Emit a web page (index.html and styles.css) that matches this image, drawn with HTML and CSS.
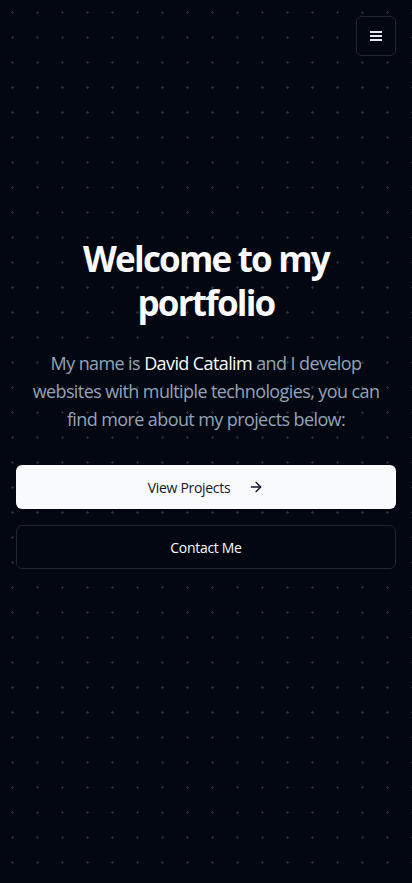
FILE: index.html
```html
<!DOCTYPE html>
<html lang="en">
<head>
<meta charset="utf-8">
<meta name="viewport" content="width=device-width, initial-scale=1">
<title>Portfolio</title>
<link rel="stylesheet" href="styles.css">
</head>
<body>
<div class="page">
  <header class="topbar">
    <button class="menu-btn" aria-label="Open menu">
      <svg width="12" height="10" viewBox="0 0 12 10" aria-hidden="true">
        <rect x="0" y="0" width="12" height="2" fill="currentColor"/>
        <rect x="0" y="4" width="12" height="2" fill="currentColor"/>
        <rect x="0" y="8" width="12" height="2" fill="currentColor"/>
      </svg>
    </button>
  </header>
  <main class="hero">
    <h1 class="hero-title">Welcome to my portfolio</h1>
    <p class="hero-text">My name is <span class="hero-name">David Catalim</span> and I develop websites with multiple technologies, you can find more about my projects below:</p>
    <div class="hero-actions">
      <a class="btn btn-primary" href="#projects">View Projects
        <svg class="btn-icon" width="16" height="16" viewBox="0 0 24 24" fill="none" stroke="currentColor" stroke-width="2" stroke-linecap="round" stroke-linejoin="round" aria-hidden="true"><path d="M5 12h14"/><path d="m12 5 7 7-7 7"/></svg>
      </a>
      <a class="btn btn-outline" href="#contact">Contact Me</a>
    </div>
  </main>
</div>
</body>
</html>
```

FILE: styles.css
```css
* { box-sizing: border-box; }
html, body { margin: 0; padding: 0; }
body {
  background-color: #030712;
  background-image: url("data:image/svg+xml,%3Csvg xmlns='http://www.w3.org/2000/svg' width='25' height='25'%3E%3Crect x='11' y='12' width='3' height='1' fill='%23262c3b'/%3E%3Crect x='12' y='11' width='1' height='3' fill='%23262c3b'/%3E%3C/svg%3E");
  background-size: 25px 25px;
  color: #f8fafc;
  font-family: "Open Sans", "Noto Sans", sans-serif;
  min-height: 883px;
}
.page { min-height: 883px; }
.topbar {
  display: flex;
  justify-content: flex-end;
  padding: 16px;
}
.menu-btn {
  width: 40px;
  height: 40px;
  display: flex;
  align-items: center;
  justify-content: center;
  background: #030712;
  border: 1px solid #1e2533;
  border-radius: 6px;
  color: #e2e8f0;
  padding: 0;
}
.hero {
  padding: 165px 16px 0;
  text-align: center;
}
.hero-title {
  margin: 0 auto;
  max-width: 290px;
  font-size: 35px;
  line-height: 44px;
  font-weight: 700;
  letter-spacing: -1.8px;
  color: #f8fafc;
}
.hero-text {
  margin: 24px 0 0;
  font-size: 18px;
  line-height: 28px;
  letter-spacing: -0.6px;
  color: #94a3b8;
}
.hero-name { color: #f8fafc; }
.hero-actions {
  margin-top: 32px;
  display: flex;
  flex-direction: column;
  gap: 16px;
}
.btn {
  height: 44px;
  display: flex;
  align-items: center;
  justify-content: center;
  border-radius: 6px;
  font-size: 14px;
  letter-spacing: -0.3px;
  text-decoration: none;
}
.btn-primary {
  background: #f8fafc;
  color: #0f172a;
}
.btn-icon { margin-left: 18px; }
.btn-outline {
  border: 1px solid #1e2533;
  color: #f8fafc;
  background: #030712;
}
```
